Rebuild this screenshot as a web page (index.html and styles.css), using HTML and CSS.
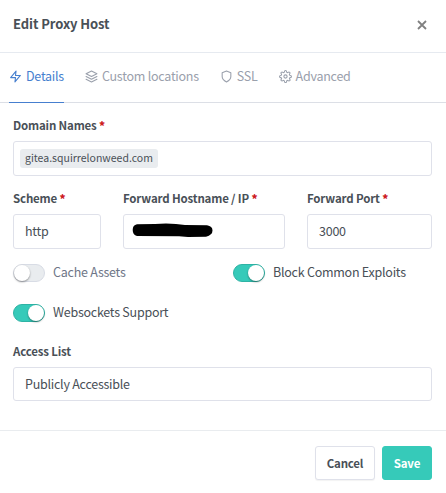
FILE: index.html
```html
<!DOCTYPE html>
<html lang="en">
<head>
<meta charset="utf-8">
<title>Edit Proxy Host</title>
<link rel="stylesheet" href="styles.css">
</head>
<body>
<div class="modal">
  <header class="modal-header">
    <h5 class="modal-title">Edit Proxy Host</h5>
    <button class="close" type="button" aria-label="Close"><svg width="10" height="10" viewBox="0 0 10 10"><path d="M1 1l8 8M9 1L1 9"/></svg></button>
  </header>
  <nav class="tabs">
    <a class="tab active"><svg class="icon" viewBox="0 0 24 24"><path d="M13 2 3 14h9l-1 8 10-12h-9z"/></svg><span>Details</span></a>
    <a class="tab"><svg class="icon" viewBox="0 0 24 24"><path d="M12 2 2 7l10 5 10-5zM2 17l10 5 10-5M2 12l10 5 10-5"/></svg><span>Custom locations</span></a>
    <a class="tab"><svg class="icon" viewBox="0 0 24 24"><path d="M12 22s8-4 8-10V5l-8-3-8 3v7c0 6 8 10 8 10z"/></svg><span>SSL</span></a>
    <a class="tab"><svg class="icon" viewBox="0 0 24 24"><circle cx="12" cy="12" r="3"/><path d="M19.4 15a1.65 1.65 0 0 0 .33 1.82l.06.06a2 2 0 0 1 0 2.83 2 2 0 0 1-2.83 0l-.06-.06a1.65 1.65 0 0 0-1.82-.33 1.65 1.65 0 0 0-1 1.51V21a2 2 0 0 1-2 2 2 2 0 0 1-2-2v-.09A1.65 1.65 0 0 0 9 19.4a1.65 1.65 0 0 0-1.82.33l-.06.06a2 2 0 0 1-2.83 0 2 2 0 0 1 0-2.83l.06-.06a1.65 1.65 0 0 0 .33-1.82 1.65 1.65 0 0 0-1.51-1H3a2 2 0 0 1-2-2 2 2 0 0 1 2-2h.09A1.65 1.65 0 0 0 4.6 9a1.65 1.65 0 0 0-.33-1.82l-.06-.06a2 2 0 0 1 0-2.83 2 2 0 0 1 2.83 0l.06.06a1.65 1.65 0 0 0 1.82.33H9a1.65 1.65 0 0 0 1-1.51V3a2 2 0 0 1 2-2 2 2 0 0 1 2 2v.09a1.65 1.65 0 0 0 1 1.51 1.65 1.65 0 0 0 1.82-.33l.06-.06a2 2 0 0 1 2.83 0 2 2 0 0 1 0 2.83l-.06.06a1.65 1.65 0 0 0-.33 1.82V9a1.65 1.65 0 0 0 1.51 1H21a2 2 0 0 1 2 2 2 2 0 0 1-2 2h-.09a1.65 1.65 0 0 0-1.51 1z"/></svg><span>Advanced</span></a>
  </nav>
  <form class="modal-body">
    <div class="field">
      <label class="label"><span>Domain Names</span> <b class="req">*</b></label>
      <div class="input tags"><span class="tag">gitea.squirrelonweed.com</span></div>
    </div>
    <div class="row">
      <div class="field">
        <label class="label"><span>Scheme</span> <b class="req">*</b></label>
        <div class="input"><span>http</span></div>
      </div>
      <div class="field">
        <label class="label"><span>Forward Hostname / IP</span> <b class="req">*</b></label>
        <div class="input redacted"><svg width="82" height="15" viewBox="0 0 82 15"><path d="M5 1.2 23 1 34 .4 44 1 53 2.1 75 2.2Q80.500 3 80.500 7.500T74 13.700L56 14 47 13.200 5 13Q.7 12 .7 7T5 1.200z"/></svg></div>
      </div>
      <div class="field">
        <label class="label"><span>Forward Port</span> <b class="req">*</b></label>
        <div class="input"><span>3000</span></div>
      </div>
    </div>
    <div class="switches">
      <label class="switch"><i class="track"></i><span>Cache Assets</span></label>
      <label class="switch on"><i class="track"></i><span>Block Common Exploits</span></label>
      <label class="switch on"><i class="track"></i><span>Websockets Support</span></label>
    </div>
    <div class="field">
      <label class="label"><span>Access List</span></label>
      <div class="input select"><span>Publicly Accessible</span></div>
    </div>
  </form>
  <footer class="modal-footer">
    <button class="btn cancel" type="button">Cancel</button>
    <button class="btn save" type="button">Save</button>
  </footer>
</div>
</body>
</html>
```
FILE: styles.css
```css
* { box-sizing: border-box; }
body {
  margin: 0;
  background: #fff;
  color: #495057;
  font: 12.5px/20px "Noto Sans CJK SC", "Open Sans", sans-serif;
  letter-spacing: -.25px;
}
.modal { width: 446px; height: 493px; overflow: hidden; white-space: nowrap; }
.modal-header {
  display: flex;
  justify-content: space-between;
  align-items: center;
  height: 53px;
  padding: 0 19px 4px 13px;
  border-bottom: 1px solid #e6eaf0;
}
.modal-title { margin: 0; font-size: 13px; font-weight: 700; line-height: 20px; letter-spacing: -.08px; }
.close { display: flex; padding: 0; border: 0; background: none; }
.close svg { position: relative; top: 1px; fill: none; stroke: #808080; stroke-width: 1.8; }
.tabs {
  display: flex;
  height: 50px;
  padding-left: 9px;
  gap: 21px;
  border-bottom: 1px solid #dcdfe6;
}
.tab {
  display: flex;
  align-items: center;
  height: 50px;
  gap: 4px;
  padding-bottom: 3px;
  color: #9aa0ac;
}
.tab span { padding-bottom: 2px; }
.tab.active { border-bottom: 1px solid #467fcf; color: #467fcf; padding-bottom: 2px; }
.icon {
  width: 13px;
  height: 13px;
  fill: none;
  stroke: currentColor;
  stroke-width: 2;
  stroke-linecap: round;
  stroke-linejoin: round;
}
.modal-body { padding: 13px 14px 0 13px; }
.label { display: block; height: 20px; margin-bottom: 5px; font-size: 11.5px; font-weight: 700; line-height: 19px; letter-spacing: -.17px; }
.req { color: #cd201f; }
.input {
  display: flex;
  align-items: center;
  height: 35px;
  padding: 0 11px 1px;
  border: 1px solid #dfe1ea;
  border-radius: 3px;
}
.input.tags { padding: 0 6px; }
.input.select { height: 34px; }
.tag { height: 19px; padding: 0 5px; border-radius: 3px; background: #e9ecef; font-size: 10.5px; line-height: 17px; letter-spacing: 0; }
.row { display: grid; grid-template-columns: 88px 162px 125px; gap: 22px; margin-top: 13px; }
.redacted { padding: 0 8px 2px; }
.switches { display: grid; grid-template-columns: 220px 1fr; row-gap: 20px; margin-top: 14px; }
.switch { display: flex; align-items: center; gap: 8px; height: 20px; color: #6e7687; }
.switch span { padding-bottom: 2px; }
.switch.on { color: #495057; }
.track {
  display: flex;
  width: 32px;
  height: 18px;
  border: 1px solid #d8dce5;
  border-radius: 9px;
  background: #e9ecef;
}
.track::before {
  content: "";
  width: 16px;
  height: 16px;
  border-radius: 50%;
  background: #fff;
  box-shadow: 0 1px 2px rgba(0, 0, 0, .4);
}
.switch.on .track { justify-content: flex-end; border-color: #2fb3a5; background: #36cab9; }
.switches + .field { margin-top: 19px; }
.modal-footer {
  display: flex;
  justify-content: flex-end;
  gap: 7px;
  margin-top: 29px;
  padding: 15px 14px 0;
  border-top: 1px solid #e9ecef;
}
.btn {
  height: 34px;
  padding: 0;
  border: 1px solid #dfe1ea;
  border-radius: 3px;
  background: #fff;
  color: #495057;
  font: 700 11.5px/20px "Noto Sans CJK SC", "Open Sans", sans-serif;
  letter-spacing: -.2px;
}
.cancel { width: 60px; box-shadow: 0 1px 1px rgba(0, 0, 0, .05); }
.save { width: 50px; border-color: #36cab9; background: #36cab9; color: #fff; }
```
